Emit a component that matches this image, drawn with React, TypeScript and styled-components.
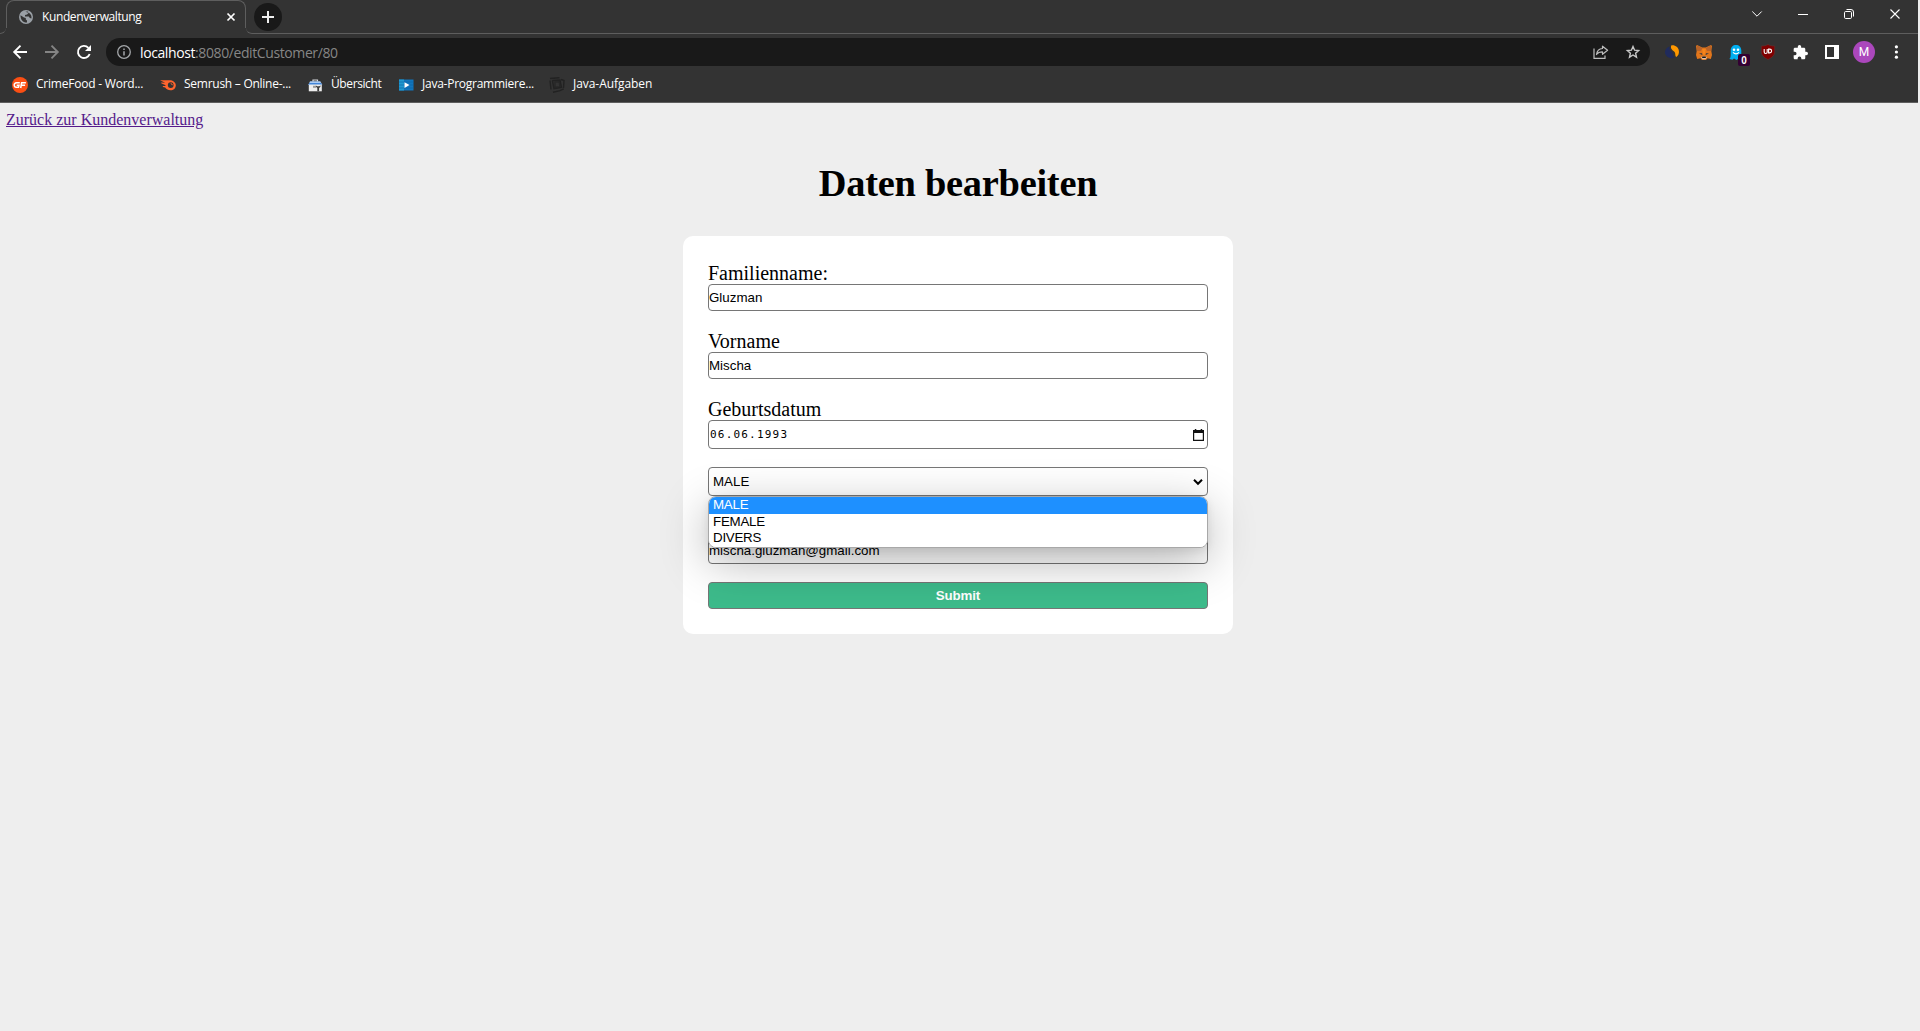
import React from "react";
import styled, { createGlobalStyle } from "styled-components";

const GlobalStyle = createGlobalStyle`
  body {
    margin: 0;
    background: #eee;
    color: #000;
    font-family: "Liberation Serif", "Times New Roman", serif;
    overflow: hidden;
  }
  * { box-sizing: border-box; }
  svg { display: block; flex: none; overflow: visible; }
`;

const Window = styled.div`
  display: flex;
  flex-direction: column;
  width: 1918px;
  height: 1031px;
`;

const Chrome = styled.header`
  display: flex;
  flex-direction: column;
  height: 103px;
  background: #333;
  border-bottom: 1px solid #5e5e5e;
  color: #fff;
  font-family: "Open Sans", "Noto Sans", sans-serif;
  font-size: 12px;
`;

const TabStrip = styled.div`
  display: flex;
  height: 34px;
`;

const StripEdge = styled.div<{ $grow?: boolean }>`
  width: 6px;
  flex: ${(p) => (p.$grow ? "1" : "none")};
  display: flex;
  justify-content: space-between;
  border-bottom: 1px solid #5e5e5e;
  border-bottom-right-radius: ${(p) => (p.$grow ? 0 : 6)}px;
  border-bottom-left-radius: ${(p) => (p.$grow ? 6 : 0)}px;
`;

const Tab = styled.div`
  width: 240px;
  height: 28px;
  display: flex;
  align-items: center;
  padding: 5px 10px 0 12px;
  border: 1px solid #5e5e5e;
  border-bottom: 0;
  border-radius: 8px 8px 0 0;
`;

const TabTitle = styled.span<{ $track: number }>`
  flex: 1;
  margin-left: 9px;
  white-space: nowrap;
  line-height: 16px;
  letter-spacing: ${(p) => p.$track}px;
`;

const NewTab = styled.div`
  display: grid;
  place-items: center;
  width: 28px;
  height: 28px;
  margin: 3px 0 0 8px;
  border-radius: 50%;
  background: #191919;
`;

const WindowButtons = styled.div`
  display: flex;
  height: 28px;
`;

const WindowButton = styled.div`
  display: grid;
  place-items: center;
  width: 46px;
`;

const Toolbar = styled.div`
  display: flex;
  align-items: center;
  height: 36px;
  padding: 0 6px 0 4px;
`;

const ToolButton = styled.div`
  position: relative;
  display: grid;
  place-items: center;
  flex: none;
  width: 32px;
  height: 28px;
`;

const AddressBar = styled.div`
  display: flex;
  align-items: center;
  flex: 1;
  height: 28px;
  margin: 0 6px;
  padding: 0 1px 0 11px;
  border-radius: 14px;
  background: #191919;
`;

const Url = styled.span`
  flex: 1;
  margin-left: 9px;
  padding-top: 1px;
  font-size: 14px;
  line-height: 20px;
  letter-spacing: -0.4px;
  color: #868686;
  b { font-weight: 400; color: #fff; }
`;

const BlockCount = styled.span`
  position: absolute;
  left: 18px;
  top: 16px;
  width: 12px;
  height: 12px;
  border-radius: 2px;
  background: #330033;
  font: bold 10px/13px "Liberation Sans", sans-serif;
  text-align: center;
`;

const Avatar = styled.span`
  width: 22px;
  height: 22px;
  border-radius: 50%;
  background: #ab47bc;
  font: 12px/22px Roboto, sans-serif;
  text-align: center;
`;

const BookmarkBar = styled.div`
  display: flex;
  align-items: center;
  height: 29px;
  padding-left: 12px;
`;

const Bookmark = styled.div<{ $width: number; $track: number }>`
  display: flex;
  align-items: center;
  gap: 8px;
  width: ${(p) => p.$width}px;
  white-space: nowrap;
  line-height: 16px;
  letter-spacing: ${(p) => p.$track}px;
`;

const BookmarkLabel = styled.span`
  padding-bottom: 2px;
`;

const Page = styled.main`
  flex: 1;
  padding: 8px 8px 0 6px;
`;

const BackLink = styled.a`
  display: block;
  font-size: 16px;
  line-height: 18px;
  color: #551a8b;
`;

const Heading = styled.h1`
  margin: 31px 0 30px;
  font-size: 38.4px;
  line-height: 46px;
  letter-spacing: -0.25px;
  text-align: center;
  width: 1904px;
`;

const Card = styled.form`
  width: 550px;
  margin-left: 677px;
  padding: 25px;
  border-radius: 10px;
  background: #fff;
`;

const Field = styled.div<{ $covered?: boolean }>`
  position: relative;
  margin-bottom: 18px;
  padding-top: ${(p) => (p.$covered ? 23 : 0)}px;
`;

const Label = styled.label`
  display: block;
  height: 23px;
  font-size: 20px;
  line-height: 25px;
`;

const Box = styled.div<{ $tall?: boolean; $mono?: boolean; $select?: boolean }>`
  display: flex;
  align-items: center;
  justify-content: space-between;
  height: ${(p) => (p.$tall ? 29 : 27)}px;
  padding: 0 ${(p) => (p.$select ? 4 : 3)}px 0 ${(p) => (p.$select ? 4 : p.$mono ? 1 : 0)}px;
  border: 1px solid #767676;
  border-radius: 4px;
  background: #fff;
  font-family: ${(p) => (p.$mono ? '"DejaVu Sans Mono", monospace' : '"Liberation Sans", Arial, sans-serif')};
  font-size: ${(p) => (p.$mono ? 11 : 13.333)}px;
  letter-spacing: ${(p) => (p.$mono ? 1.2 : 0)}px;
`;

const Submit = styled.button`
  display: block;
  width: 500px;
  height: 27px;
  padding: 0;
  border: 1px solid #767676;
  border-radius: 4px;
  background: #3dbb8b;
  color: #fff;
  font: bold 13.333px "Liberation Sans", Arial, sans-serif;
  letter-spacing: -0.15px;
`;

const Options = styled.div`
  position: absolute;
  z-index: 2;
  left: 0;
  top: 29px;
  width: 500px;
  height: 52px;
  overflow: hidden;
  border: 1px solid #a8a8a8;
  border-radius: 8px;
  background: #fff;
  box-shadow: 0 13px 48px 0 rgba(0, 0, 0, 0.3), 0 3px 8px rgba(0, 0, 0, 0.08);
  font: 13.333px/16.67px "Liberation Sans", Arial, sans-serif;
  letter-spacing: -0.25px;
`;

const Option = styled.div<{ $active?: boolean }>`
  height: 16.67px;
  padding-left: 4px;
  background: ${(p) => (p.$active ? "#1e90ff" : "#fff")};
  color: ${(p) => (p.$active ? "#fff" : "#000")};
`;

const GlobeIcon = () => (
  <svg width="14" height="14" viewBox="0 0 14 14">
    <circle cx="7" cy="7" r="7" fill="#9aa0a6" />
    <path d="M1.500 5.200 5 7.600 6.800 8v1.500L8 10.500v2C4.500 12.900 1.300 10 1.500 5.200ZM6.300 1.700 9 1.600 9.500 3 8 4.400 6 5v1.500h3.800l1 1.600 1.600.4a5.600 5.600 0 0 0-2.200-5.600Z" fill="#333" />
  </svg>
);

const CloseIcon = ({ size, weight }: { size: number; weight: number }) => (
  <svg width={size} height={size} viewBox={`0 0 ${size} ${size}`}>
    <path d={`M.5.5 ${size - 0.5} ${size - 0.5}M${size - 0.5}.5.5 ${size - 0.5}`} stroke="#fff" strokeWidth={weight} />
  </svg>
);

const ArrowIcon = ({ color, flip }: { color: string; flip?: boolean }) => (
  <svg width="14" height="14" viewBox="0 0 14 14" transform={flip ? "scale(-1 1)" : undefined}>
    <path d="M14 7H1.500M7.500.7 1.200 7l6.300 6.300" stroke={color} strokeWidth="1.9" fill="none" />
  </svg>
);

const ReloadIcon = () => (
  <svg width="14" height="14" viewBox="0 0 14 14">
    <path d="M12.700 9A6.050 6.050 0 1 1 11.400 2.800" stroke="#fff" strokeWidth="1.900" fill="none" />
    <path d="M14 0v6H8Z" fill="#fff" />
  </svg>
);

const InfoIcon = () => (
  <svg width="14" height="14" viewBox="0 0 14 14">
    <circle cx="7" cy="7" r="6.300" stroke="#a4a7aa" strokeWidth="1.300" fill="none" />
    <path d="M7 6.200v4.300M7 3.400v1.500" stroke="#a4a7aa" strokeWidth="1.500" />
  </svg>
);

const ShareIcon = () => (
  <svg width="16" height="14" viewBox="0 0 16 14" fill="none" stroke="#bdbdbd" strokeWidth="1.200">
    <path d="M1 3.500v9.900h11v-3" />
    <path d="M9.500 1.200 14.600 5.300 9.500 9.300V6.900C6.500 6.900 4.800 7.700 3.500 9.500 4 6 6 3.800 9.500 3.500Z" strokeLinejoin="round" />
  </svg>
);

const StarIcon = () => (
  <svg width="14" height="14" viewBox="0 0 14 14">
    <path d="m7 1.500 1.600 3.700 4 .3-3 2.700.9 4L7 10l-3.500 2.200.9-4-3-2.700 4-.3Z" fill="none" stroke="#c8c8c8" strokeWidth="1.400" />
  </svg>
);

const BalanceIcon = () => (
  <svg width="14" height="14" viewBox="0 0 14 14">
    <path d="M5 1.400C1 2.200-.8 6 .4 9.300 1.600 12.700 6 14.300 9.800 12.300 7.600 11.500 8.400 8.800 7 7 5.500 5.200 3.400 4.300 5 1.400Z" fill="#202b5c" />
    <path d="M6.200.5c3.600-.8 7.200 1.600 7.700 5.400.3 2.400-.6 4.600-2.500 6C9.600 10.800 11 8.500 9.400 6.700 8.300 5.500 5 4.300 6.200.5Z" fill="#ff9800" />
  </svg>
);

const FoxIcon = () => (
  <svg width="16" height="15" viewBox="0 0 16 15">
    <path d="m0 1 1-1 5.200 2.400h3.600L15 0l1 1-.7 5 .7 4-1.200 4-3.300-.8L10 15H6l-1.500-1.800-3.300.8L0 10l.7-4Z" fill="#e2761b" />
    <path d="M1 .3 6.400 3 5 6 .8 6Zm14 0L9.600 3 11 6l4.200 0Z" fill="#b8642a" />
    <path d="m6.200 4 1 5.700h1.600l1-5.700Z" fill="#f6851b" />
    <path d="m3 8.500 3-.3.400 1.700Zm10 0-3-.3-.4 1.700Z" fill="#233447" />
    <path d="m5 12.200 1.500-.8h3l1.500.8-1.500 2h-3Z" fill="#d7c1b3" />
    <path d="M6.300 11.600h3.400l.2 1.500H6.100Z" fill="#161616" />
  </svg>
);

const GhostIcon = () => (
  <svg width="14" height="15" viewBox="0 0 14 15">
    <path d="M1.700 5.500C1.700 2 4 0 7 0s5.300 2 5.300 5.500V15l-2.600-1.500L7.500 15 5 13.500 3.500 14.700.3 14c1.200-1 1.400-2.500 1.400-4.500Z" fill="#00aef0" />
    <circle cx="5" cy="4.700" r="1.300" fill="#fff" />
    <circle cx="9" cy="4.700" r="1.300" fill="#fff" />
    <path d="M4 7.400Q7 10.400 10 7.400" stroke="#fff" strokeWidth="1.200" fill="none" />
  </svg>
);

const ShieldIcon = () => (
  <svg width="14" height="16" viewBox="0 0 14 16">
    <path d="M7 .4C9 1.500 11 2 13.700 2v5.500c0 4-3 6.200-6.700 8.100C3.300 13.700.3 11.500.3 7.500V2C3 2 5 1.500 7 .4Z" fill="#800000" stroke="#5c3030" strokeWidth=".7" />
    <path d="M3.200 5v3a1.500 1.500 0 0 0 3 0V5M7.600 5.100v3.800h1.100a1.900 1.900 0 0 0 0-3.800Z" stroke="#fff" strokeWidth="1.100" fill="none" />
  </svg>
);

const PuzzleIcon = () => (
  <svg width="15" height="15" viewBox="1.500 1 21 22">
    <path fill="#fff" d="M20.500 11H19V7c0-1.100-.9-2-2-2h-4V3.500a2.500 2.500 0 0 0-5 0V5H4c-1.100 0-2 .9-2 2v3.800h1.500a2.700 2.700 0 0 1 0 5.400H2V20c0 1.100.9 2 2 2h3.800v-1.500a2.700 2.700 0 0 1 5.400 0V22H17c1.100 0 2-.9 2-2v-4h1.500a2.500 2.500 0 0 0 0-5Z" />
  </svg>
);

const PanelIcon = () => (
  <svg width="14" height="14" viewBox="0 0 14 14">
    <path d="M0 0h14v14H0ZM2 2v10h7V2Z" fillRule="evenodd" fill="#fff" />
  </svg>
);

const DotsIcon = () => (
  <svg width="4" height="14" viewBox="-.4 0 4 14" fill="#fff">
    <circle cx="2" cy="1.800" r="1.600" />
    <circle cx="2" cy="7" r="1.600" />
    <circle cx="2" cy="12.200" r="1.600" />
  </svg>
);

const CrimeFoodIcon = () => (
  <svg width="16" height="16" viewBox="0 0 16 16">
    <circle cx="8" cy="8" r="8" fill="#fb4f14" />
    <path d="M7.800 5.700H4.500Q2.300 5.900 2.200 8q.1 2.300 2.100 2.300h2.200L7 8.300H4.700M8.700 11l.9-5.200h4.300M9.500 8.300h3.600" stroke="#fff" strokeWidth="1.500" fill="none" />
  </svg>
);

const SemrushIcon = () => (
  <svg width="16" height="16" viewBox="0 0 16 16">
    <path d="M0 3.200h9.300C13 3.200 15.800 5.300 15.800 8.200c0 3-2.300 5-5.300 5-2.300 0-4-1-5.300-2.700L3 9.900l-.3-.9 3 .1-.6-1.200L1.200 6.200V5.500l4 .2Z" fill="#ff642d" />
    <circle cx="10.700" cy="8.100" r="2.900" fill="#333" />
    <path d="M10.700 6.500q1.600.2 1.600 1.700" stroke="#ff642d" strokeWidth="1" fill="none" />
  </svg>
);

const ToolboxIcon = () => (
  <svg width="15" height="15" viewBox="0 0 15 15">
    <path d="M5 4.600V3h4.500v1.600" stroke="#d8dade" strokeWidth="1.200" fill="none" />
    <path d="M2 4.200h10.300L14.300 8H.3Z" fill="#a9cbf5" />
    <path d="M1.300 6h11.800l1.100 2H.3Z" fill="#4285d8" />
    <path d="M.8 7.500h13v6.800H.8Z" fill="#ededed" />
    <path d="M5 8.800h3v2H5Z" fill="#999" />
    <path d="M7.800 8.600q0 2 1.500 2.400v3.300h1.800V11q1.600-.4 1.600-2.400l-1.500.7h-2Z" fill="#3c3c3c" />
  </svg>
);

const VideoIcon = () => (
  <svg width="16" height="16" viewBox="0 0 16 16">
    <path d="M1 2.500h14.500v11H1Z" fill="#1175bd" />
    <path d="M1 2.500h5v11H1Z" fill="#2099cf" />
    <path d="M1 5h14.500M1 8h14.500M1 11h14.500" stroke="#0c5fa5" strokeWidth=".6" />
    <path d="M6.500 5.200v5.800l5-2.900Z" fill="#fff" />
  </svg>
);

const KnotIcon = () => (
  <svg width="16" height="16" viewBox="0 0 16 16" fill="none" stroke="#222" strokeWidth="1.400">
    <path d="M1 1.500 10.500.8M12 2.500 15 3.500 14.500 11M1 3.500l1 9M4 15.200l7-1.500 3.700-1.800M4 3.500 11 3l1.500 7.500-7.500 1.300L3.500 4Z" />
    <path d="m6 5 4.300-.2.700 5-5 .5Z" opacity=".7" />
  </svg>
);

const bookmarks = [
  { label: "CrimeFood - Word...", icon: <CrimeFoodIcon />, width: 148, track: -0.22 },
  { label: "Semrush – Online-...", icon: <SemrushIcon />, width: 148, track: -0.26 },
  { label: "Übersicht", icon: <ToolboxIcon />, width: 90, track: -0.4 },
  { label: "Java-Programmiere...", icon: <VideoIcon />, width: 151, track: -0.25 },
  { label: "Java-Aufgaben", icon: <KnotIcon />, width: 110, track: -0.05 },
];

export default function App() {
  return (
    <>
      <GlobalStyle />
      <Window>
        <Chrome>
          <TabStrip>
            <StripEdge />
            <Tab>
              <GlobeIcon />
              <TabTitle $track={-0.39}>Kundenverwaltung</TabTitle>
              <CloseIcon size={8} weight={1.7} />
            </Tab>
            <StripEdge $grow>
              <NewTab>
                <svg width="12" height="12" viewBox="0 0 12 12">
                  <path d="M6 0v12M0 6h12" stroke="#eee" strokeWidth="2" />
                </svg>
              </NewTab>
              <WindowButtons>
                <WindowButton>
                  <svg width="10" height="6" viewBox="0 0 10 6">
                    <path d="m.3.500 4.700 4.700L9.700.500" stroke="#fff" fill="none" />
                  </svg>
                </WindowButton>
                <WindowButton>
                  <svg width="10" height="1" viewBox="0 0 10 1">
                    <path d="M0 .5h10" stroke="#fff" />
                  </svg>
                </WindowButton>
                <WindowButton>
                  <svg width="10" height="10" viewBox="0 0 10 10" fill="none" stroke="#fff">
                    <rect x=".5" y="2.500" width="7" height="7" rx="1.200" />
                    <path d="M2.500.5h4.500a2.500 2.500 0 0 1 2.500 2.500v4.500" />
                  </svg>
                </WindowButton>
                <WindowButton>
                  <CloseIcon size={10} weight={1.1} />
                </WindowButton>
              </WindowButtons>
            </StripEdge>
          </TabStrip>
          <Toolbar>
            <ToolButton><ArrowIcon color="#fff" /></ToolButton>
            <ToolButton><ArrowIcon color="#858585" flip /></ToolButton>
            <ToolButton><ReloadIcon /></ToolButton>
            <AddressBar>
              <InfoIcon />
              <Url><b>localhost</b>:8080/editCustomer/80</Url>
              <ToolButton><ShareIcon /></ToolButton>
              <ToolButton><StarIcon /></ToolButton>
            </AddressBar>
            <ToolButton><BalanceIcon /></ToolButton>
            <ToolButton><FoxIcon /></ToolButton>
            <ToolButton>
              <GhostIcon />
              <BlockCount>0</BlockCount>
            </ToolButton>
            <ToolButton><ShieldIcon /></ToolButton>
            <ToolButton><PuzzleIcon /></ToolButton>
            <ToolButton><PanelIcon /></ToolButton>
            <ToolButton><Avatar>M</Avatar></ToolButton>
            <ToolButton><DotsIcon /></ToolButton>
          </Toolbar>
          <BookmarkBar>
            {bookmarks.map((b) => (
              <Bookmark key={b.label} $width={b.width} $track={b.track}>
                {b.icon}
                <BookmarkLabel>{b.label}</BookmarkLabel>
              </Bookmark>
            ))}
          </BookmarkBar>
        </Chrome>
        <Page>
          <BackLink href="#">Zurück zur Kundenverwaltung</BackLink>
          <Heading>Daten bearbeiten</Heading>
          <Card>
            <Field>
              <Label>Familienname:</Label>
              <Box>Gluzman</Box>
            </Field>
            <Field>
              <Label>Vorname</Label>
              <Box>Mischa</Box>
            </Field>
            <Field>
              <Label>Geburtsdatum</Label>
              <Box $tall $mono>
                06.06.1993
                <svg width="11" height="12" viewBox="0 0 11 12">
                  <path d="M1.800 0h1.500v1H7.700V0h1.500v1H11v11H0V1h1.800ZM1.200 4v6.800h8.600V4Z" fillRule="evenodd" fill="#111" />
                </svg>
              </Box>
            </Field>
            <Field>
              <Box $tall $select>
                MALE
                <svg width="10" height="6" viewBox="0 0 10 6">
                  <path d="m1 .8 4 4 4-4" stroke="#000" strokeWidth="2" fill="none" />
                </svg>
              </Box>
              <Options>
                <Option $active>MALE</Option>
                <Option>FEMALE</Option>
                <Option>DIVERS</Option>
              </Options>
            </Field>
            <Field $covered>
              <Box>mischa.gluzman@gmail.com</Box>
            </Field>
            <Submit type="button">Submit</Submit>
          </Card>
        </Page>
      </Window>
    </>
  );
}
